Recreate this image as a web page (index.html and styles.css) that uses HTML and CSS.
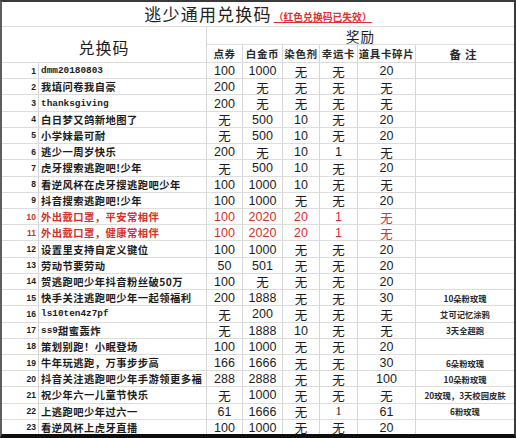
FILE: index.html
```html
<!DOCTYPE html>
<html lang="zh-CN">
<head>
<meta charset="utf-8">
<title>逃少通用兑换码</title>
<link rel="stylesheet" href="styles.css">
</head>
<body>
<div class="frame">
  <div class="sheet">
    <div class="title"><span class="title-main">逃少通用兑换码</span><span class="title-note">（红色兑换码已失效）</span></div>
    <div class="h-code">兑换码</div>
    <div class="h-reward">奖励</div>
    <div class="h-sub">点券</div>
    <div class="h-sub">白金币</div>
    <div class="h-sub">染色剂</div>
    <div class="h-sub">幸运卡</div>
    <div class="h-sub">道具卡碎片</div>
    <div class="h-sub h-note">备注</div>

    <div class="row"><span class="num">1</span><span class="code latin">dmm20180803</span><span class="v">100</span><span class="v">1000</span><span class="v">无</span><span class="v">无</span><span class="v">20</span><span class="rm"></span></div>
    <div class="row"><span class="num">2</span><span class="code">我填问卷我自豪</span><span class="v">200</span><span class="v">无</span><span class="v">无</span><span class="v">无</span><span class="v">无</span><span class="rm"></span></div>
    <div class="row"><span class="num">3</span><span class="code latin">thanksgiving</span><span class="v">200</span><span class="v">无</span><span class="v">无</span><span class="v">无</span><span class="v">无</span><span class="rm"></span></div>
    <div class="row"><span class="num">4</span><span class="code">白日梦又鸽新地图了</span><span class="v">无</span><span class="v">500</span><span class="v">10</span><span class="v">无</span><span class="v">20</span><span class="rm"></span></div>
    <div class="row"><span class="num">5</span><span class="code">小学妹最可耐</span><span class="v">无</span><span class="v">500</span><span class="v">10</span><span class="v">无</span><span class="v">20</span><span class="rm"></span></div>
    <div class="row"><span class="num">6</span><span class="code">逃少一周岁快乐</span><span class="v">200</span><span class="v">无</span><span class="v">10</span><span class="v">1</span><span class="v">无</span><span class="rm"></span></div>
    <div class="row"><span class="num">7</span><span class="code">虎牙搜索逃跑吧!少年</span><span class="v">无</span><span class="v">500</span><span class="v">10</span><span class="v">无</span><span class="v">20</span><span class="rm"></span></div>
    <div class="row"><span class="num">8</span><span class="code">看逆风杯在虎牙搜逃跑吧少年</span><span class="v">100</span><span class="v">1000</span><span class="v">10</span><span class="v">无</span><span class="v">无</span><span class="rm"></span></div>
    <div class="row"><span class="num">9</span><span class="code">抖音搜索逃跑吧!少年</span><span class="v">100</span><span class="v">1000</span><span class="v">无</span><span class="v">无</span><span class="v">20</span><span class="rm"></span></div>
    <div class="row expired"><span class="num">10</span><span class="code">外出戴口罩，平安常相伴</span><span class="v">100</span><span class="v">2020</span><span class="v">20</span><span class="v">1</span><span class="v">无</span><span class="rm"></span></div>
    <div class="row expired"><span class="num">11</span><span class="code">外出戴口罩，健康常相伴</span><span class="v">100</span><span class="v">2020</span><span class="v">20</span><span class="v">1</span><span class="v">无</span><span class="rm"></span></div>
    <div class="row"><span class="num">12</span><span class="code">设置里支持自定义键位</span><span class="v">100</span><span class="v">1000</span><span class="v">无</span><span class="v">无</span><span class="v">20</span><span class="rm"></span></div>
    <div class="row"><span class="num">13</span><span class="code">劳动节要劳动</span><span class="v">50</span><span class="v">501</span><span class="v">无</span><span class="v">无</span><span class="v">20</span><span class="rm"></span></div>
    <div class="row"><span class="num">14</span><span class="code">贺逃跑吧少年抖音粉丝破50万</span><span class="v">100</span><span class="v">无</span><span class="v">无</span><span class="v">无</span><span class="v">20</span><span class="rm"></span></div>
    <div class="row"><span class="num">15</span><span class="code">快手关注逃跑吧少年一起领福利</span><span class="v">200</span><span class="v">1888</span><span class="v">无</span><span class="v">无</span><span class="v">30</span><span class="rm">10朵粉玫瑰</span></div>
    <div class="row"><span class="num">16</span><span class="code latin">ls10ten4z7pf</span><span class="v">无</span><span class="v">200</span><span class="v">无</span><span class="v">无</span><span class="v">无</span><span class="rm">艾可记忆涂鸦</span></div>
    <div class="row"><span class="num">17</span><span class="code"><span class="latin">ss9</span>甜蜜轰炸</span><span class="v">无</span><span class="v">1888</span><span class="v">10</span><span class="v">无</span><span class="v">无</span><span class="rm">3天全超跑</span></div>
    <div class="row"><span class="num">18</span><span class="code">策划别跑！小眠登场</span><span class="v">100</span><span class="v">1000</span><span class="v">无</span><span class="v">无</span><span class="v">20</span><span class="rm"></span></div>
    <div class="row"><span class="num">19</span><span class="code">牛年玩逃跑，万事步步高</span><span class="v">166</span><span class="v">1666</span><span class="v">无</span><span class="v">无</span><span class="v">30</span><span class="rm">6朵粉玫瑰</span></div>
    <div class="row"><span class="num">20</span><span class="code">抖音关注逃跑吧少年手游领更多福</span><span class="v">288</span><span class="v">2888</span><span class="v">无</span><span class="v">无</span><span class="v">100</span><span class="rm">10朵粉玫瑰</span></div>
    <div class="row"><span class="num">21</span><span class="code">祝少年六一儿童节快乐</span><span class="v">无</span><span class="v">1000</span><span class="v">无</span><span class="v">无</span><span class="v">无</span><span class="rm">20玫瑰，3天校园皮肤</span></div>
    <div class="row"><span class="num">22</span><span class="code">上逃跑吧少年过六一</span><span class="v">61</span><span class="v">1666</span><span class="v">无</span><span class="v serif">1</span><span class="v">61</span><span class="rm">6粉玫瑰</span></div>
    <div class="row"><span class="num">23</span><span class="code">看逆风杯上虎牙直播</span><span class="v">100</span><span class="v">1000</span><span class="v">无</span><span class="v">无</span><span class="v">20</span><span class="rm"></span></div>
  </div>
</div>
</body>
</html>
```

FILE: styles.css
```css
html, body {
  margin: 0;
  padding: 0;
  background: #ffffff;
}

.frame {
  width: 516px;
  height: 438px;
  box-sizing: border-box;
  border-top: 2px solid #3a3a3a;
  border-left: 2px solid #5e5e5e;
  border-right: 2px solid #3a3a3a;
  border-bottom: 4px solid #0e0e0e;
  overflow: hidden;
  background: #ffffff;
}

.sheet {
  display: grid;
  grid-template-columns: 37px 168px 36px 40px 37px 38px 58px 98px;
  grid-template-rows: 25px 18px 18px repeat(23, 16.23px);
  font-family: "Noto Sans CJK SC", "Liberation Sans", sans-serif;
  color: #1c1c1c;
}

.sheet > div:not(.row),
.row > span {
  box-sizing: border-box;
  border-right: 1px solid #d6d6d6;
  border-bottom: 1px solid #dddddd;
  display: flex;
  align-items: center;
  justify-content: center;
  white-space: nowrap;
  overflow: hidden;
}

.row {
  display: contents;
}

.title {
  grid-column: 1 / -1;
  grid-row: 1;
  border-right: 0 !important;
  align-items: flex-end !important;
  padding-bottom: 2px;
}

.title-main {
  font-size: 17px;
  letter-spacing: 1.2px;
  color: #222222;
  line-height: 20px;
}

.title-note {
  margin-left: 2px;
  font-size: 9.8px;
  line-height: 14px;
  font-weight: 700;
  color: #e0322c;
  text-decoration: underline;
  text-decoration-color: #e0322c;
  text-underline-offset: 1px;
}

.h-code {
  grid-column: 1 / 3;
  grid-row: 2 / 4;
  font-size: 16px;
  letter-spacing: 1px;
  padding-top: 4px;
}

.h-reward {
  grid-column: 3 / -1;
  grid-row: 2;
  font-size: 13.5px;
  letter-spacing: 1px;
  border-right: 0 !important;
}

.h-sub {
  font-size: 10.5px;
  font-weight: 700;
  letter-spacing: 0.6px;
  color: #2a2a2a;
}

.h-note {
  border-right: 0 !important;
  font-size: 11.5px;
  letter-spacing: 4px;
  font-weight: 700;
}

.num {
  justify-content: flex-end !important;
  padding-right: 2px;
  font-family: "Liberation Sans", sans-serif;
  font-size: 8.5px;
  font-weight: 700;
}

.code {
  justify-content: flex-start !important;
  padding-left: 2px;
  font-size: 10.3px;
  letter-spacing: 0.45px;
  font-weight: 700;
}

.latin {
  font-family: "Liberation Mono", monospace;
  font-size: 9.4px;
  letter-spacing: 0;
  font-weight: 700;
}

.v {
  font-family: "Liberation Sans", "Noto Sans CJK SC", sans-serif;
  font-size: 12.5px;
  padding-top: 1px;
}

.serif {
  font-family: "Liberation Serif", serif;
}

.rm {
  border-right: 0 !important;
  font-size: 8.3px;
  font-weight: 700;
  color: #2a2a2a;
}

.expired > span {
  color: #d6302b;
}
```
